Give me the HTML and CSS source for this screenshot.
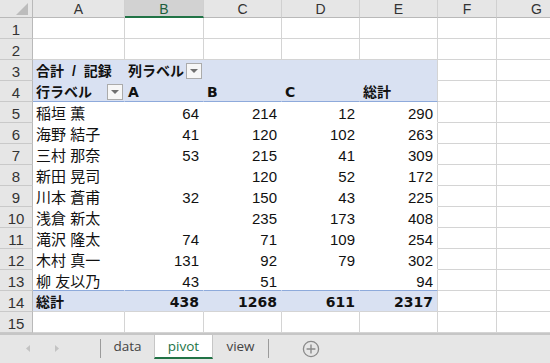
FILE: index.html
```html
<!DOCTYPE html>
<html lang="ja">
<head>
<meta charset="utf-8">
<title>pivot</title>
<link rel="stylesheet" href="styles.css">
</head>
<body>
<div class="sheet">
  <!-- column headers -->
  <div class="corner"></div>
  <div class="ch">A</div>
  <div class="ch sel">B</div>
  <div class="ch">C</div>
  <div class="ch">D</div>
  <div class="ch">E</div>
  <div class="ch">F</div>
  <div class="ch">G</div>

  <div class="rh">1</div>
  <div class="c"></div><div class="c"></div><div class="c"></div><div class="c"></div><div class="c"></div><div class="c"></div><div class="c"></div>

  <div class="rh">2</div>
  <div class="c"></div><div class="c"></div><div class="c"></div><div class="c"></div><div class="c"></div><div class="c"></div><div class="c"></div>

  <!-- pivot table -->
  <div class="rh">3</div>
  <div class="c pv ph b ws">合計 / 記録</div>
  <div class="c pv ph b fl"><span class="dd"></span>列ラベル</div>
  <div class="c pv ph"></div>
  <div class="c pv ph"></div>
  <div class="c pv ph pe"></div>
  <div class="c"></div><div class="c"></div>

  <div class="rh">4</div>
  <div class="c pv ph pl b fl"><span class="dd"></span>行ラベル</div>
  <div class="c pv ph pl hb">A</div>
  <div class="c pv ph pl hb">B</div>
  <div class="c pv ph pl hb">C</div>
  <div class="c pv ph pl pe b">総計</div>
  <div class="c"></div><div class="c"></div>

  <div class="rh">5</div>
  <div class="c pv">稲垣 薫</div>
  <div class="c pv n">64</div><div class="c pv n">214</div><div class="c pv n">12</div><div class="c pv n pe">290</div>
  <div class="c"></div><div class="c"></div>

  <div class="rh">6</div>
  <div class="c pv">海野 結子</div>
  <div class="c pv n">41</div><div class="c pv n">120</div><div class="c pv n">102</div><div class="c pv n pe">263</div>
  <div class="c"></div><div class="c"></div>

  <div class="rh">7</div>
  <div class="c pv">三村 那奈</div>
  <div class="c pv n">53</div><div class="c pv n">215</div><div class="c pv n">41</div><div class="c pv n pe">309</div>
  <div class="c"></div><div class="c"></div>

  <div class="rh">8</div>
  <div class="c pv">新田 晃司</div>
  <div class="c pv n"></div><div class="c pv n">120</div><div class="c pv n">52</div><div class="c pv n pe">172</div>
  <div class="c"></div><div class="c"></div>

  <div class="rh">9</div>
  <div class="c pv">川本 蒼甫</div>
  <div class="c pv n">32</div><div class="c pv n">150</div><div class="c pv n">43</div><div class="c pv n pe">225</div>
  <div class="c"></div><div class="c"></div>

  <div class="rh">10</div>
  <div class="c pv">浅倉 新太</div>
  <div class="c pv n"></div><div class="c pv n">235</div><div class="c pv n">173</div><div class="c pv n pe">408</div>
  <div class="c"></div><div class="c"></div>

  <div class="rh">11</div>
  <div class="c pv">滝沢 隆太</div>
  <div class="c pv n">74</div><div class="c pv n">71</div><div class="c pv n">109</div><div class="c pv n pe">254</div>
  <div class="c"></div><div class="c"></div>

  <div class="rh">12</div>
  <div class="c pv">木村 真一</div>
  <div class="c pv n">131</div><div class="c pv n">92</div><div class="c pv n">79</div><div class="c pv n pe">302</div>
  <div class="c"></div><div class="c"></div>

  <div class="rh">13</div>
  <div class="c pv pl">柳 友以乃</div>
  <div class="c pv pl n">43</div><div class="c pv pl n">51</div><div class="c pv pl n"></div><div class="c pv pl n pe">94</div>
  <div class="c"></div><div class="c"></div>

  <div class="rh">14</div>
  <div class="c pv pt b">総計</div>
  <div class="c pv pt n hb">438</div><div class="c pv pt n hb">1268</div><div class="c pv pt n hb">611</div><div class="c pv pt n hb pe">2317</div>
  <div class="c"></div><div class="c"></div>

  <div class="rh">15</div>
  <div class="c"></div><div class="c"></div><div class="c"></div><div class="c"></div><div class="c"></div><div class="c"></div><div class="c"></div>
</div>

<div class="tabs">
  <div class="nav">
    <svg width="100" height="28" viewBox="0 0 100 28">
      <polygon points="26,13.5 30,10 30,17" fill="#c3c3c3"/>
      <polygon points="55,10 55,17 59,13.5" fill="#c3c3c3"/>
    </svg>
  </div>
  <div class="sep"></div>
  <div class="tab tab-data">data</div>
  <div class="tab tab-pivot">pivot</div>
  <div class="tab tab-view">view</div>
  <div class="sep"></div>
  <div class="add">
    <svg width="18" height="18" viewBox="0 0 18 18">
      <circle cx="9" cy="9" r="7.6" fill="none" stroke="#8a8a8a" stroke-width="1.3"/>
      <path d="M9 4.6v8.8M4.6 9h8.8" stroke="#8a8a8a" stroke-width="1.4"/>
    </svg>
  </div>
</div>
</body>
</html>
```

FILE: styles.css
```css
body {
    margin: 0;
    width: 550px;
    height: 363px;
    overflow: hidden;
    background: #ffffff;
    font-family: "Liberation Sans", "Noto Sans CJK JP", sans-serif;
}

.sheet {
    display: grid;
    grid-template-columns: 33px 92px 79px 78px 78px 78px 59px 80px;
    grid-template-rows: 18px repeat(15, 21px);
}

.sheet > div {
    box-sizing: border-box;
    white-space: nowrap;
}

/* headers */
.corner {
    display: flex;
    justify-content: flex-end;
    align-items: flex-end;
    padding: 0 4px 2px 0;
    background: #e6e6e6;
    border-right: 1px solid #b9b9b9;
    border-bottom: 1px solid #b9b9b9;
}

.corner::after {
    content: "";
    border-left: 12px solid transparent;
    border-bottom: 12px solid #bcbcbc;
}

.ch {
    background: #e6e6e6;
    border-right: 1px solid #d0d0d0;
    border-bottom: 1px solid #b9b9b9;
    text-align: center;
    font-size: 14px;
    line-height: 17px;
    padding-top: 1px;
    color: #333;
}

.ch.sel {
    background: #d2d2d2;
    border-bottom: 2px solid #217346;
    color: #1d5e3b;
}

.rh {
    background: #e6e6e6;
    border-right: 1px solid #b9b9b9;
    border-bottom: 1px solid #c9c9c9;
    text-align: center;
    font-size: 15px;
    line-height: 19px;
    padding-top: 2px;
    color: #333;
}

/* cells */
.c {
    border-right: 1px solid #d4d4d4;
    border-bottom: 1px solid #d4d4d4;
    font-size: 15px;
    line-height: 19px;
    padding: 2px 4px 0 3px;
    color: #111;
}

.pv {
    border-right-color: transparent;
    border-bottom-color: transparent;
}

.pe {
    border-right-color: #d4d4d4;
}

.ph {
    background: #d9e1f2;
}

.pl {
    border-bottom-color: #8eaadb;
}

.pt {
    background: #d9e1f2;
    border-bottom-color: #d4d4d4;
}

.n {
    text-align: right;
}

.b {
    font-weight: bold;
    font-size: 14px;
}

.ws {
    word-spacing: 4px;
}

.hb {
    font-family: "DejaVu Sans", "Noto Sans CJK JP", sans-serif;
    font-weight: bold;
    font-size: 14px;
}

.fl {
    padding-right: 1px;
}

.dd {
    float: right;
    display: flex;
    justify-content: center;
    align-items: center;
    width: 16px;
    height: 16px;
    box-sizing: border-box;
    margin-top: 1px;
    border: 1px solid #ababab;
    background: #f7f7f7;
}

.dd::after {
    content: "";
    border-left: 4px solid transparent;
    border-right: 4px solid transparent;
    border-top: 4px solid #707070;
}

/* sheet tabs */
.tabs {
    display: flex;
    height: 30px;
    box-sizing: border-box;
    border-top: 2px solid #c6c6c6;
    background: #e6e6e6;
    font-family: "Open Sans", sans-serif;
    font-size: 13.5px;
    color: #444;
}

.nav {
    width: 100px;
}

.nav svg {
    display: block;
}

.sep {
    width: 1px;
    height: 19px;
    margin-top: 4px;
    background: #9b9b9b;
}

.tab {
    height: 24px;
    box-sizing: border-box;
    line-height: 23px;
    text-align: center;
}

.tab-data {
    width: 53px;
}

.tab-pivot {
    width: 59px;
    background: #ffffff;
    border-left: 1px solid #c6c6c6;
    border-right: 1px solid #c6c6c6;
    border-bottom: 2px solid #217346;
    color: #217346;
}

.tab-view {
    width: 55px;
}

.add {
    display: flex;
    align-items: center;
    height: 27px;
    margin-left: 33px;
}

.add svg {
    display: block;
}
```
